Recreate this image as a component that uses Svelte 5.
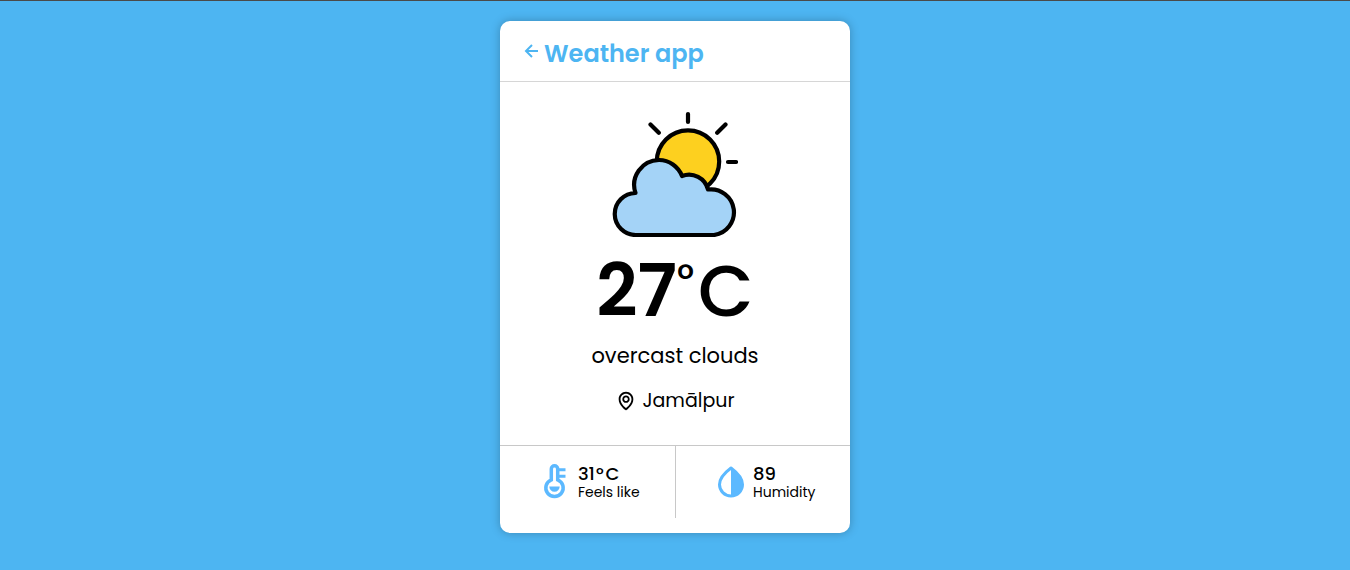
<script>
  const weather = {
    temp: 27,
    description: 'overcast clouds',
    place: 'Jamālpur',
    feels: 31,
    humidity: 89
  };
</script>

<main>
  <section class="card">
    <header>
      <button type="button" aria-label="Back">
        <svg width="24" height="24" viewBox="0 0 24 24" fill="currentColor" aria-hidden="true">
          <path d="M12.707 17.293 8.414 13H18v-2H8.414l4.293-4.293-1.414-1.414L4.586 12l6.707 6.707z" />
        </svg>
      </button>
      <h1>Weather app</h1>
    </header>

    <div class="body">
      <svg class="sky" viewBox="12 11 126 126" fill="none" stroke="#000" stroke-width="4.200" stroke-linecap="round" stroke-linejoin="round" aria-hidden="true">
        <path d="M88 14v8M50.500 24.500l8.300 8.300M125.500 24.500l-8.300 8.300M128 62h8" />
        <circle cx="88" cy="61.500" r="31.200" fill="#fdd01f" />
        <path fill="#a4d3f7" d="M36 135A21 21 0 0 1 35.500 93A25 25 0 0 1 59 60A25 25 0 0 1 82 76A19.500 19.500 0 0 1 108 89.500A22.900 22.900 0 1 1 114 135Z" />
      </svg>
      <div class="temp"><span class="num">{weather.temp}</span><span class="deg">°</span><span class="unit">C</span></div>
      <p class="description">{weather.description}</p>
      <p class="place">
        <svg width="22" height="22" viewBox="0 0 24 24" fill="currentColor" aria-hidden="true">
          <path d="M12 14c2.206 0 4-1.794 4-4s-1.794-4-4-4-4 1.794-4 4 1.794 4 4 4zm0-6c1.103 0 2 .897 2 2s-.897 2-2 2-2-.897-2-2 .897-2 2-2z" />
          <path d="M11.420 21.814a.998.998 0 0 0 1.160 0C12.884 21.599 20.029 16.440 20 10c0-4.411-3.589-8-8-8S4 5.589 4 9.995c-.029 6.445 7.116 11.604 7.420 11.819zM12 4c3.309 0 6 2.691 6 6.005.021 4.438-4.388 8.423-6 9.730-1.611-1.308-6.021-5.294-6-9.735 0-3.309 2.691-6 6-6z" />
        </svg>
        <span>{weather.place}</span>
      </p>
    </div>

    <footer>
      <div class="detail">
        <svg width="26" height="36" viewBox="0 0 26 36" fill="none" stroke="currentColor" stroke-width="3.500" aria-hidden="true">
          <path d="M8.300 15.800V5a3.200 3.200 0 0 1 6.400 0v10.800a8.700 8.700 0 1 1-6.400 0Z" />
          <path d="M15 5.800h7.500M15 12.200h7.500" stroke-width="3" />
          <path d="M6.300 22.500h10.400a5.200 5.200 0 0 1-10.400 0Z" fill="currentColor" stroke="none" />
        </svg>
        <div>
          <strong>{weather.feels}<i>°</i>C</strong>
          <span>Feels like</span>
        </div>
      </div>
      <div class="detail">
        <svg width="26" height="32" viewBox="0 0 26 32" fill="none" stroke="currentColor" stroke-width="3" stroke-linejoin="round" aria-hidden="true">
          <path d="M13 2C9 5 1.500 11.500 1.500 18.500a11.500 11.500 0 0 0 23 0C24.500 11.500 17 5 13 2Z" />
          <path d="M13 2C17 5 24.500 11.500 24.500 18.500A11.500 11.500 0 0 1 13 30Z" fill="currentColor" stroke="none" />
        </svg>
        <div>
          <strong>{weather.humidity}</strong>
          <span>Humidity</span>
        </div>
      </div>
    </footer>
  </section>
</main>

<style>
  :global(body) {
    margin: 0;
    background: #4db5f2;
  }
  main {
    display: flex;
    justify-content: center;
    padding: 20px 16px;
    border-top: 1px solid #4a4a4a;
    font-family: Poppins, Inter, sans-serif;
    color: #000;
  }
  .card {
    width: 100%;
    max-width: 350px;
    background: #fff;
    border-radius: 10px;
    box-shadow: 0 0 10px rgba(0, 0, 0, 0.25);
  }
  header {
    display: flex;
    align-items: center;
    padding: 15px 20px 9px;
    border-bottom: 1px solid #d6d6d6;
    color: #4db5f2;
  }
  button {
    display: flex;
    margin-bottom: 6px;
    padding: 0;
    border: 0;
    background: none;
    color: inherit;
    cursor: pointer;
  }
  h1 {
    margin: 0;
    font-size: 24px;
    line-height: 36px;
    font-weight: 600;
  }
  p {
    margin: 0;
  }
  .body {
    display: flex;
    flex-direction: column;
    align-items: center;
    padding: 29px 20px;
  }
  .sky {
    width: 126px;
    height: 126px;
  }
  .temp {
    display: flex;
    margin-top: 16px;
    font-size: 72px;
    line-height: 76px;
  }
  .num {
    font-weight: 600;
  }
  .deg {
    padding-right: 4px;
    font-size: 40px;
    line-height: 52px;
    font-weight: 500;
  }
  .unit {
    font-weight: 500;
  }
  .description {
    margin-top: 12px;
    font-size: 21px;
    line-height: 30px;
  }
  .place {
    display: flex;
    align-items: center;
    gap: 5px;
    margin-top: 15px;
    font-size: 19px;
    line-height: 30px;
  }
  footer {
    display: flex;
    padding-bottom: 15px;
    border-top: 1px solid #c8c8c8;
  }
  .detail {
    flex: 1;
    display: flex;
    align-items: center;
    justify-content: center;
    gap: 9px;
    height: 72px;
    padding-left: 8px;
  }
  .detail + .detail {
    border-left: 1px solid #c8c8c8;
  }
  .detail svg {
    color: #5cb9ff;
  }
  .detail strong,
  .detail span {
    display: block;
  }
  .detail strong {
    font-size: 18px;
    line-height: 20px;
    font-weight: 500;
  }
  .detail i {
    padding: 0 2px 0 1px;
    font-style: normal;
  }
  .detail span {
    font-size: 14px;
    line-height: 16px;
  }
</style>
